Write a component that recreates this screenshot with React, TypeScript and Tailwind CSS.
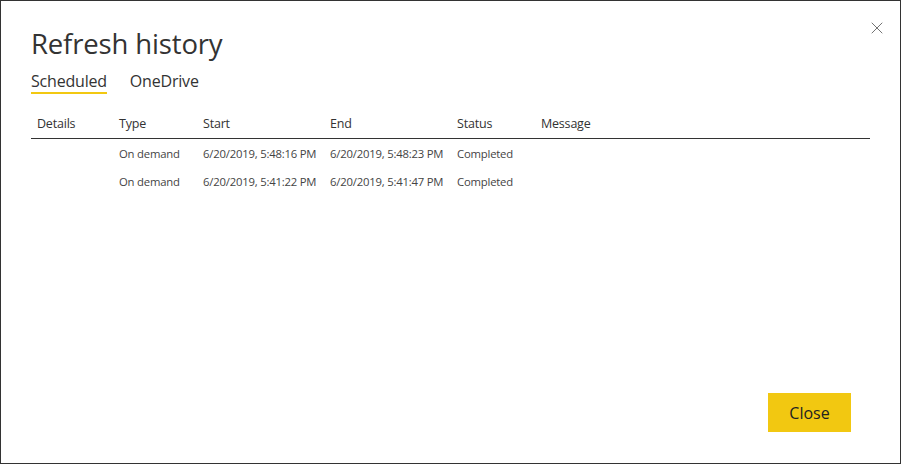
import { X } from 'lucide-react'

const rows = [
  { type: 'On demand', start: '6/20/2019, 5:48:16 PM', end: '6/20/2019, 5:48:23 PM', status: 'Completed' },
  { type: 'On demand', start: '6/20/2019, 5:41:22 PM', end: '6/20/2019, 5:41:47 PM', status: 'Completed' },
]

const cols = 'grid grid-cols-[82px_84px_127px_127px_84px_1fr]'

export default function App() {
  return (
    <div
      className="relative flex h-[464px] w-[901px] flex-col border border-[#333] bg-white px-[30px] text-[#333]"
      style={{ fontFamily: '"Segoe UI", "Open Sans", "Noto Sans", sans-serif' }}
    >
      {/* Close icon */}
      <button className="absolute right-[13px] top-[17px] text-[#666]">
        <X className="h-[20px] w-[20px]" strokeWidth={1.1} />
      </button>

      <h1 className="mt-[23px] h-[40px] text-[27.5px] leading-[40px] font-normal tracking-[-0.15px]">Refresh history</h1>

      {/* Tabs */}
      <div className="mt-[7px] flex gap-[23px] text-[16px] tracking-[-0.2px]">
        <div className="flex flex-col">
          <span className="leading-[20px]">Scheduled</span>
          <span className="mt-[1px] h-[2px] bg-[#F2C811]" />
        </div>
        <span className="leading-[20px]">OneDrive</span>
      </div>

      {/* Table */}
      <div className="mt-[16px]">
        <div className={`${cols} h-[29px] items-center border-b border-[#333] text-[12.5px] tracking-[-0.2px]`}>
          <span className="pl-[6px]">Details</span>
          <span className="pl-[6px]">Type</span>
          <span className="pl-[6px]">Start</span>
          <span className="pl-[6px]">End</span>
          <span className="pl-[6px]">Status</span>
          <span className="pl-[6px]">Message</span>
        </div>
        <div className="pt-[1px]">
          {rows.map((r, i) => (
            <div key={i} className={`${cols} h-[28px] items-center whitespace-nowrap text-[11.3px] tracking-[-0.2px] text-[#444]`}>
              <span className="pl-[6px]" />
              <span className="pl-[6px]">{r.type}</span>
              <span className="pl-[6px]">{r.start}</span>
              <span className="pl-[6px]">{r.end}</span>
              <span className="pl-[6px]">{r.status}</span>
              <span className="pl-[6px]" />
            </div>
          ))}
        </div>
      </div>

      <div className="mt-auto mb-[31px] flex justify-end pr-[19px]">
        <button className="h-[39px] w-[83px] bg-[#F2C811] text-[16px] text-[#222]">Close</button>
      </div>
    </div>
  )
}
